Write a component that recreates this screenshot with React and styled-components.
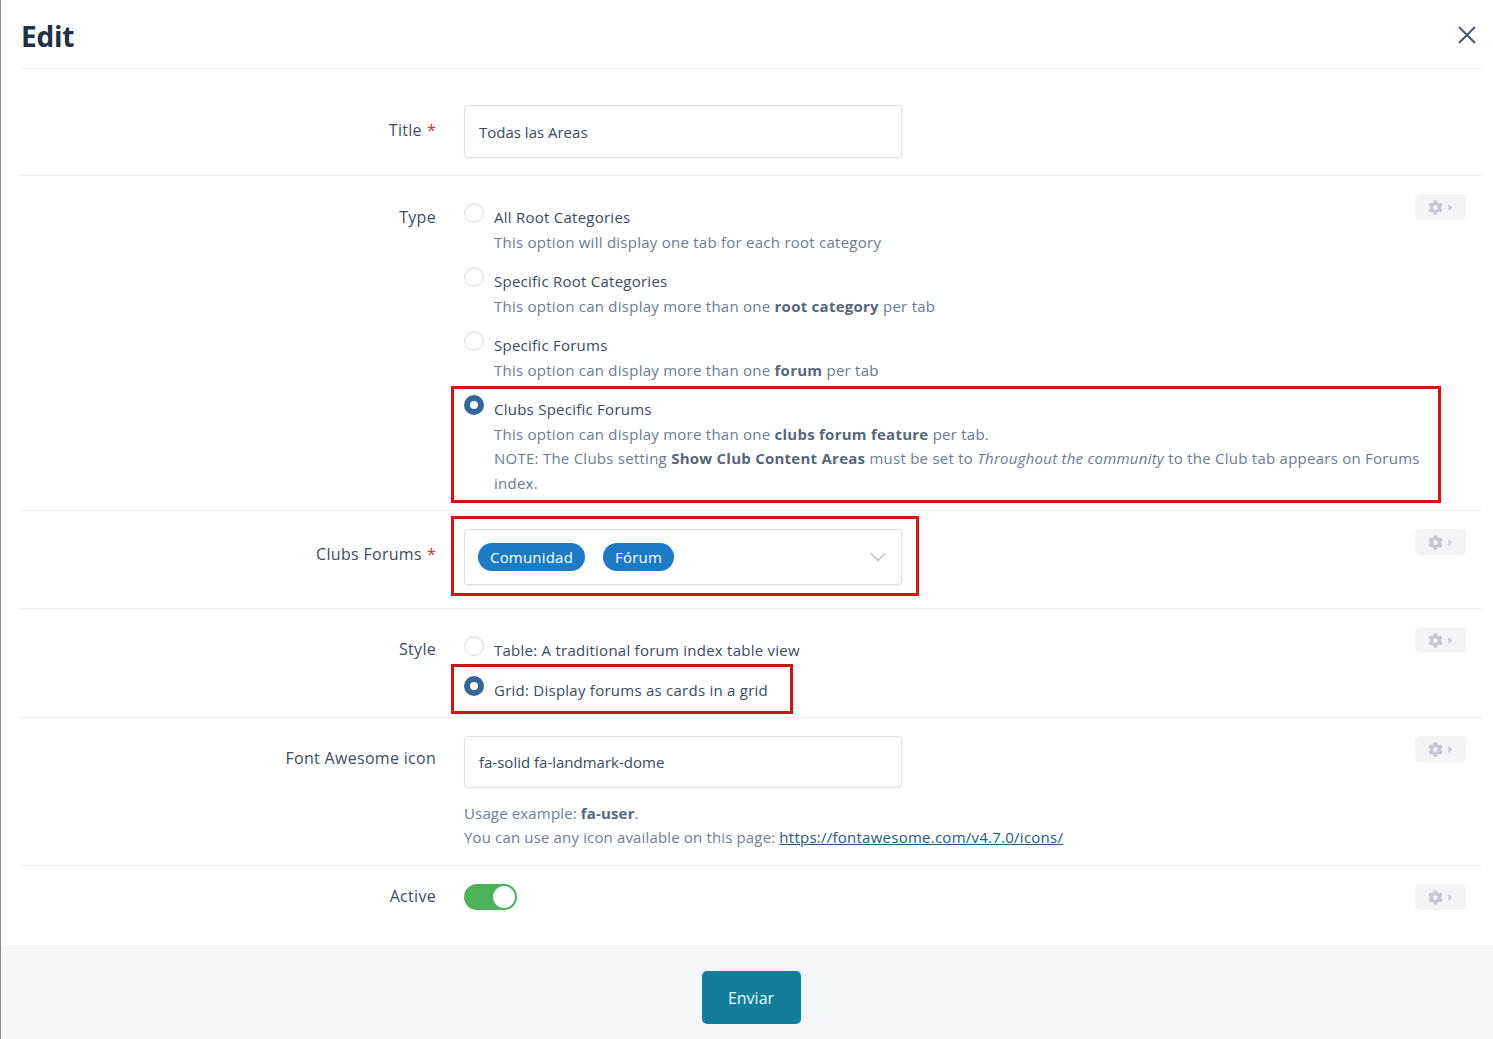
import React from "react";
import styled, { createGlobalStyle } from "styled-components";
import { FaCog, FaCaretRight } from "react-icons/fa";

const Global = createGlobalStyle`
  html, body { margin: 0; padding: 0; background: #ffffff; }
  body { font-family: "Open Sans", "Noto Sans", sans-serif; color: #3d4a5c; }
  * { box-sizing: border-box; }
`;

const Modal = styled.div`
  min-height: 1039px;
  border-left: 1px solid #8a8d91;
  display: flex;
  flex-direction: column;
  background: #fff;
`;

const Header = styled.div`
  margin: 0 11px 0 19px;
  height: 69px;
  padding-top: 4px;
  border-bottom: 1px solid #eef0f3;
  display: flex;
  align-items: center;
  justify-content: space-between;
`;

const Heading = styled.h1`
  margin: 0 0 0 1px;
  font-size: 28px;
  font-weight: 700;
  color: #232f44;
  letter-spacing: -0.2px;
`;

const CloseButton = styled.button`
  border: 0;
  background: none;
  padding: 0;
  width: 20px;
  height: 20px;
  margin-right: 5px;
  margin-bottom: 3px;
  cursor: pointer;
  display: flex;
`;

const Form = styled.div`
  padding: 18px 11px 19px 19px;
`;

const Row = styled.div`
  position: relative;
  display: flex;
  gap: 28px;
  padding: 18px 52px ${(p) => p.$bottom ?? 16}px 0;
  border-top: ${(p) => (p.$first ? "0" : "1px solid #eceef1")};
`;

const Label = styled.div`
  width: 416px;
  flex: none;
  text-align: right;
  font-size: 16px;
  letter-spacing: 0.3px;
  line-height: 24px;
  color: #3f4c5e;
  padding-top: ${(p) => p.$top}px;
`;

const Req = styled.span`
  color: #c0392b;
  margin-left: 5px;
`;

const Field = styled.div`
  flex: 1;
  min-width: 0;
`;

const TextInput = styled.div`
  width: 438px;
  height: ${(p) => p.$h}px;
  border: 1px solid #dde1e6;
  border-radius: 4px;
  box-shadow: 0 1px 2px rgba(30, 40, 60, 0.06);
  padding: 0 15px 0 14px;
  display: flex;
  align-items: center;
  font-size: 15px;
  color: #3d4a5c;
`;

const RadioList = styled.div`
  padding-top: 11px;
  display: flex;
  flex-direction: column;
  align-items: flex-start;
  gap: 15px;
`;

const Option = styled.div`
  position: relative;
  display: flex;
  gap: 10px;
  align-self: ${(p) => (p.$wide ? "stretch" : "flex-start")};
  ${(p) =>
    p.$box
      ? `&::after { content: ""; position: absolute; inset: ${p.$box}; border: 3px solid #d41414; pointer-events: none; }`
      : ""}
`;

const Radio = styled.span`
  flex: none;
  width: 20px;
  height: 20px;
  margin-top: -2px;
  border-radius: 50%;
  background: #fff;
  border: ${(p) => (p.$checked ? "6px solid #35669a" : "1px solid #d9dde3")};
  box-shadow: ${(p) =>
    p.$checked ? "none" : "inset 0 1px 2px rgba(0,0,0,0.06)"};
`;

const OptionText = styled.div`
  font-size: 15px;
  letter-spacing: 0.25px;
  line-height: 24.5px;
`;

const OptionTitle = styled.div`
  color: #3d4a5c;
`;

const Desc = styled.div`
  color: #6c7b91;
  b {
    color: #56667d;
    font-weight: 700;
  }
`;

const Boxed = styled.div`
  position: relative;
  display: inline-block;
  &::after {
    content: "";
    position: absolute;
    inset: ${(p) => p.$box};
    border: 3px solid #d41414;
    pointer-events: none;
  }
`;

const Select = styled.div`
  width: 438px;
  height: 56px;
  margin-bottom: 7px;
  border: 1px solid #dde1e6;
  border-radius: 4px;
  box-shadow: 0 1px 2px rgba(30, 40, 60, 0.06);
  padding: 0 12px 0 13px;
  display: flex;
  align-items: center;
  gap: 18px;
`;

const Tag = styled.span`
  height: 28px;
  border-radius: 14px;
  background: #1b7bc4;
  color: #fff;
  font-size: 15px;
  letter-spacing: 0.2px;
  display: inline-flex;
  align-items: center;
  padding: 0 12px;
`;

const Chevron = styled.svg`
  margin-left: auto;
  margin-right: 3px;
`;

const Help = styled.div`
  margin-top: 13px;
  font-size: 15px;
  letter-spacing: 0.15px;
  line-height: 24px;
  color: #6f7e94;
  b {
    color: #56667d;
  }
  a {
    color: #1c5b7e;
    text-decoration: underline;
    letter-spacing: 0.25px;
  }
`;

const Toggle = styled.span`
  display: flex;
  align-items: center;
  justify-content: flex-end;
  width: 53px;
  height: 26px;
  border-radius: 13px;
  background: #4cb257;
  padding: 2px;
`;

const Knob = styled.span`
  width: 22px;
  height: 22px;
  border-radius: 50%;
  background: #fff;
`;

const GearButton = styled.button`
  position: absolute;
  top: 18px;
  right: 16px;
  width: 51px;
  height: 26px;
  border: 0;
  border-radius: 5px;
  background: #f3f4f6;
  display: flex;
  align-items: center;
  justify-content: center;
  gap: 2px;
  color: #c5c9cf;
  padding: 0 0 0 2px;
`;

const Footer = styled.div`
  background: #f5f6f8;
  padding: 26px 11px 26px 19px;
  display: flex;
  justify-content: center;
`;

const Submit = styled.button`
  width: 99px;
  height: 53px;
  border: 0;
  border-radius: 5px;
  background: #137e9a;
  color: #e6fbff;
  font-family: "Open Sans", "Noto Sans", sans-serif;
  font-size: 16px;
`;

const Gear = () => (
  <GearButton>
    <FaCog size={15} />
    <FaCaretRight size={11} />
  </GearButton>
);

const RadioOption = ({ checked, title, children, box, wide }) => (
  <Option $box={box} $wide={wide}>
    <Radio $checked={checked} />
    <OptionText>
      <OptionTitle>{title}</OptionTitle>
      {children}
    </OptionText>
  </Option>
);

export default function App() {
  return (
    <>
      <Global />
      <Modal>
        <Header>
          <Heading>Edit</Heading>
          <CloseButton aria-label="Close">
            <svg width="20" height="20" viewBox="0 0 20 20">
              <path d="M2 2 L18 18 M18 2 L2 18" stroke="#45516a" strokeWidth="1.8" fill="none" />
            </svg>
          </CloseButton>
        </Header>
        <Form>
          <Row $first $bottom={17}>
            <Label $top={13}>
              Title<Req>*</Req>
            </Label>
            <Field>
              <TextInput $h={53}>Todas las Areas</TextInput>
            </Field>
          </Row>

          <Row $bottom={15}>
            <Label $top={11}>Type</Label>
            <Field>
              <RadioList>
                <RadioOption title="All Root Categories">
                  <Desc>This option will display one tab for each root category</Desc>
                </RadioOption>
                <RadioOption title="Specific Root Categories">
                  <Desc>
                    This option can display more than one <b>root category</b> per tab
                  </Desc>
                </RadioOption>
                <RadioOption title="Specific Forums">
                  <Desc>
                    This option can display more than one <b>forum</b> per tab
                  </Desc>
                </RadioOption>
                <RadioOption checked wide box="-11px -11px -8px -13px" title="Clubs Specific Forums">
                  <Desc>
                    This option can display more than one <b>clubs forum feature</b> per tab.
                  </Desc>
                  <Desc>
                    NOTE: The Clubs setting <b>Show Club Content Areas</b> must be set to{" "}
                    <i>Throughout the community</i> to the Club tab appears on Forums index.
                  </Desc>
                </RadioOption>
              </RadioList>
            </Field>
            <Gear />
          </Row>

          <Row>
            <Label $top={13}>
              Clubs Forums<Req>*</Req>
            </Label>
            <Field>
              <Boxed $box="-13px -17px -4px -13px">
                <Select>
                  <Tag>Comunidad</Tag>
                  <Tag>Fórum</Tag>
                  <Chevron width="16" height="10" viewBox="0 0 16 10">
                    <path d="M1 1.5 L8 8.5 L15 1.5" stroke="#b9bfc7" strokeWidth="1.4" fill="none" />
                  </Chevron>
                </Select>
              </Boxed>
            </Field>
            <Gear />
          </Row>

          <Row $bottom={15}>
            <Label $top={10}>Style</Label>
            <Field>
              <RadioList>
                <RadioOption title="Table: A traditional forum index table view" />
                <RadioOption checked box="-14px -25px -12px -13px" title="Grid: Display forums as cards in a grid" />
              </RadioList>
            </Field>
            <Gear />
          </Row>

          <Row>
            <Label $top={10}>Font Awesome icon</Label>
            <Field>
              <TextInput $h={52}>fa-solid fa-landmark-dome</TextInput>
              <Help>
                <div>
                  Usage example: <b>fa-user</b>.
                </div>
                <div>
                  You can use any icon available on this page:{" "}
                  <a href="#">https://fontawesome.com/v4.7.0/icons/</a>
                </div>
              </Help>
            </Field>
            <Gear />
          </Row>

          <Row>
            <Label $top={-2}>Active</Label>
            <Field>
              <Toggle>
                <Knob />
              </Toggle>
            </Field>
            <Gear />
          </Row>
        </Form>
        <Footer>
          <Submit>Enviar</Submit>
        </Footer>
      </Modal>
    </>
  );
}
